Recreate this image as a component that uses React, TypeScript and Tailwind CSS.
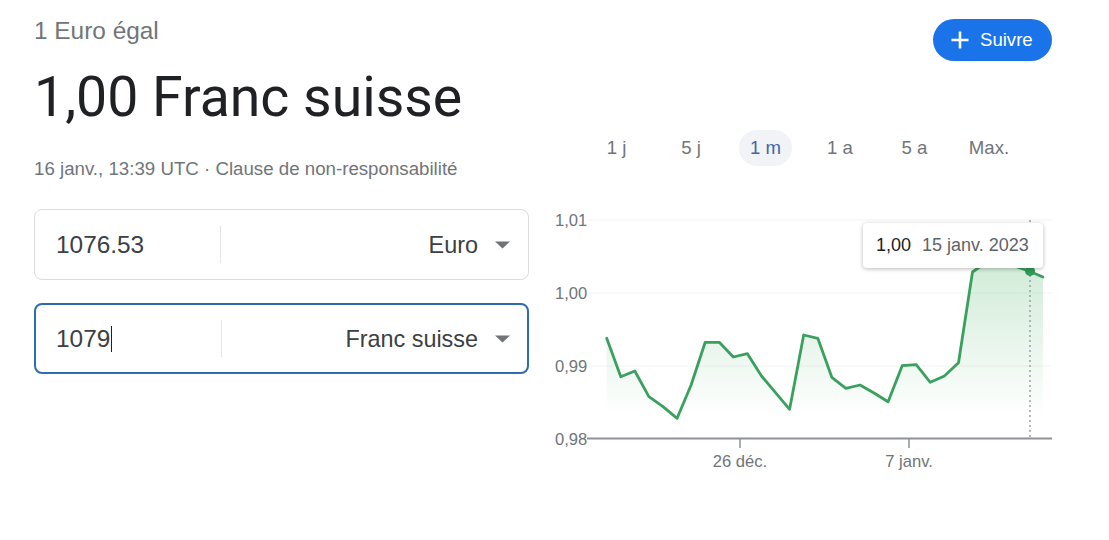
import React from "react";

const ys = [
  338.3, 376.7, 371, 396.7, 406.7, 418.3, 385, 342.3, 342.3, 357, 353.7, 376,
  392.7, 409.3, 335, 338.3, 377.3, 388.3, 385, 393, 401.7, 365.7, 364.7, 382.3,
  376, 362.7, 272, 262, 263, 266, 271, 277,
];
const pts = ys.map((y, i) => [606.7 + i * 14.07, y] as const);
const linePath = pts.map(([x, y], i) => `${i ? "L" : "M"}${x.toFixed(1)} ${y}`).join(" ");
const fillPath = `${linePath} L${pts[pts.length - 1][0].toFixed(1)} 438 L${pts[0][0].toFixed(1)} 438 Z`;

const tabs = ["1 j", "5 j", "1 m", "1 a", "5 a", "Max."];

function Caret() {
  return (
    <svg width="15" height="8" viewBox="0 0 15 8">
      <path d="M0 0.5 L15 0.5 L7.5 7.5 Z" fill="#70757a" />
    </svg>
  );
}

function Converter({ value, unit, focused }: { value: string; unit: string; focused?: boolean }) {
  return (
    <div
      className={
        focused
          ? "flex items-center h-[71px] rounded-[8px] border-2 border-[#2d6cb0]"
          : "flex items-center h-[71px] rounded-[8px] border border-[#dadce0]"
      }
    >
      <div
        className={
          (focused ? "pl-[20px] w-[185px]" : "pl-[21px] w-[185px]") +
          " flex items-center text-[24.4px] leading-[28px] text-[#3c4043] font-['Liberation_Sans',Arial,sans-serif]"
        }
      >
        <span>{value}</span>
        {focused && <span className="inline-block w-px h-[26px] bg-[#202124] ml-[1px]" />}
      </div>
      <div className="w-px h-[37px] bg-[#e3e5e8]" />
      <div
        className={
          (focused ? "pr-[17px]" : "pr-[18px]") +
          " flex-1 flex items-center justify-end gap-[17px] text-[23.4px] leading-[28px] text-[#3c4043] font-['Liberation_Sans',Arial,sans-serif]"
        }
      >
        <span>{unit}</span>
        <Caret />
      </div>
    </div>
  );
}

export default function App() {
  return (
    <div className="w-[1109px] h-[540px] bg-white flex font-['Liberation_Sans',Arial,sans-serif] overflow-hidden">
      {/* Left column */}
      <div className="w-[530px] pl-[34px] pr-[1px] flex flex-col">
        <div className="pt-[17px] text-[24.4px] leading-[28px] text-[#70757a]">1 Euro égal</div>
        <div className="mt-[21px] text-[55.4px] leading-[64px] text-[#202124] font-['Roboto',sans-serif] whitespace-nowrap">
          1,00 Franc suisse
        </div>
        <div className="mt-[28px] text-[18.7px] leading-[22px] text-[#70757a] whitespace-nowrap">
          16 janv., 13:39 UTC · Clause de non-responsabilité
        </div>
        <div className="mt-[29px]">
          <Converter value="1076.53" unit="Euro" />
        </div>
        <div className="mt-[23px]">
          <Converter value="1079" unit="Franc suisse" focused />
        </div>
      </div>

      {/* Right column */}
      <div className="flex-1 flex flex-col">
        <div className="flex justify-end pr-[57px] pt-[19px]">
          <button className="w-[119px] h-[42px] rounded-full bg-[#1a73e8] flex items-center pl-[18px] gap-[11px] text-white text-[18.6px] leading-[22px]">
            <svg width="18" height="18" viewBox="0 0 18 18">
              <path d="M9 0.5 V17.5 M0.5 9 H17.5" stroke="white" strokeWidth="2.6" fill="none" />
            </svg>
            <span>Suivre</span>
          </button>
        </div>

        <div className="mt-[69px] pl-[60px] flex gap-[21.5px]">
          {tabs.map((t) => (
            <div
              key={t}
              className={
                t === "1 m"
                  ? "w-[53px] h-[36px] rounded-full bg-[#f1f3f6] flex items-center justify-center text-[18.6px] text-[#4066a8]"
                  : "w-[53px] h-[36px] rounded-full flex items-center justify-center text-[18.6px] text-[#70757a]"
              }
            >
              {t}
            </div>
          ))}
        </div>

        <div className="relative mt-[34px] w-[540px] h-[280px]">
          <svg width="540" height="280" viewBox="530 200 540 280" className="block">
            <defs>
              <linearGradient id="fillg" x1="0" y1="255" x2="0" y2="418" gradientUnits="userSpaceOnUse">
                <stop offset="0" stopColor="#34a853" stopOpacity="0.24" />
                <stop offset="1" stopColor="#34a853" stopOpacity="0" />
              </linearGradient>
            </defs>
            {[220, 293, 366].map((y) => (
              <line key={y} x1="588" x2="1052" y1={y} y2={y} stroke="#f1f3f4" strokeWidth="1" />
            ))}
            <path d={fillPath} fill="url(#fillg)" />
            <line x1="1030" x2="1030" y1="220" y2="438" stroke="#9aa0a6" strokeWidth="1.5" strokeDasharray="2 3" />
            <line x1="587" x2="1052" y1="438.5" y2="438.5" stroke="#8e9297" strokeWidth="2" />
            <line x1="740" x2="740" y1="438" y2="448" stroke="#8e9297" strokeWidth="1.5" />
            <line x1="909" x2="909" y1="438" y2="448" stroke="#8e9297" strokeWidth="1.5" />
            <path d={linePath} fill="none" stroke="#3aa05e" strokeWidth="2.8" strokeLinejoin="round" strokeLinecap="round" />
            <circle cx="1030" cy="271" r="5" fill="#2f9b58" />
            <g fontFamily="'Liberation Sans', Arial, sans-serif" fontSize="16.6" fill="#70757a">
              <text x="555" y="226">1,01</text>
              <text x="555" y="299">1,00</text>
              <text x="555" y="372">0,99</text>
              <text x="555" y="445">0,98</text>
              <text x="740" y="467" textAnchor="middle">26 déc.</text>
              <text x="909" y="467" textAnchor="middle">7 janv.</text>
            </g>
          </svg>
          <div className="absolute left-[333px] top-[23px] w-[180px] h-[45px] bg-white rounded-[4px] shadow-[0_1px_4px_rgba(0,0,0,0.28)] flex items-center pl-[13px] gap-[11px] text-[18px] whitespace-nowrap">
            <span className="text-[#202124]">1,00</span>
            <span className="text-[#5f6368]">15 janv. 2023</span>
          </div>
        </div>
      </div>
    </div>
  );
}
